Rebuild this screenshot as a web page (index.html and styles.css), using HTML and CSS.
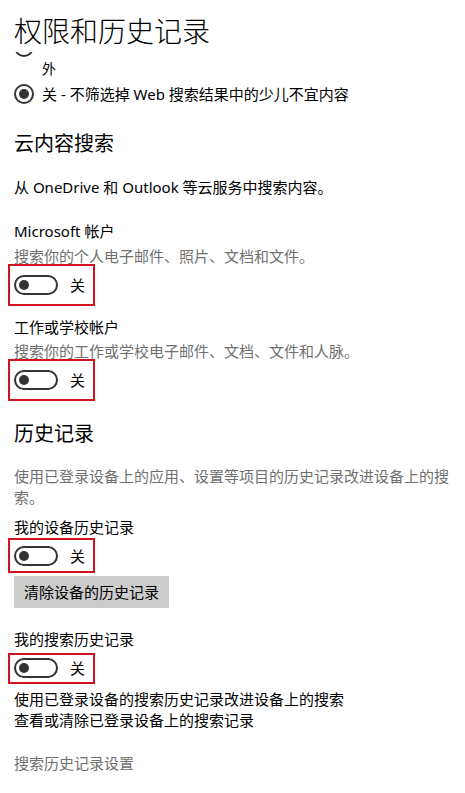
FILE: index.html
```html
<!DOCTYPE html>
<html lang="zh-CN">
<head>
<meta charset="utf-8">
<title>权限和历史记录</title>
<link rel="stylesheet" href="styles.css">
</head>
<body>
<div class="page">
  <header class="header">
    <h1 class="title">权限和历史记录</h1>
  </header>
  <main class="scroll">
    <div class="content">
      <div class="radio radio-first">
        <span class="radio-dot"></span>
        <span class="radio-label"><span class="line spacer"></span><span class="line">外</span></span>
      </div>
      <div class="radio radio-second">
        <span class="radio-dot"></span>
        <span class="radio-label"><span class="line">关 - 不筛选掉 Web 搜索结果中的少儿不宜内容</span></span>
      </div>

      <h2 class="section-title st-cloud">云内容搜索</h2>
      <p class="text t-cloud">从 OneDrive 和 Outlook 等云服务中搜索内容。</p>

      <p class="text t-ms">Microsoft 帐户</p>
      <p class="text muted t-ms-desc">搜索你的个人电子邮件、照片、文档和文件。</p>
      <div class="toggle-row tr-1">
        <span class="toggle"><span class="knob"></span></span>
        <span class="toggle-text">关</span>
      </div>

      <p class="text t-work">工作或学校帐户</p>
      <p class="text muted t-work-desc">搜索你的工作或学校电子邮件、文档、文件和人脉。</p>
      <div class="toggle-row tr-2">
        <span class="toggle"><span class="knob"></span></span>
        <span class="toggle-text">关</span>
      </div>

      <h2 class="section-title st-history">历史记录</h2>
      <p class="text muted t-hist-desc">使用已登录设备上的应用、设置等项目的历史记录改进设备上的搜索。</p>

      <p class="text t-device">我的设备历史记录</p>
      <div class="toggle-row tr-3">
        <span class="toggle"><span class="knob"></span></span>
        <span class="toggle-text">关</span>
      </div>
      <button class="btn" type="button">清除设备的历史记录</button>

      <p class="text t-search">我的搜索历史记录</p>
      <div class="toggle-row tr-4">
        <span class="toggle"><span class="knob"></span></span>
        <span class="toggle-text">关</span>
      </div>
      <p class="text t-link1">使用已登录设备的搜索历史记录改进设备上的搜索</p>
      <p class="text t-link2">查看或清除已登录设备上的搜索记录</p>

      <p class="text muted t-settings">搜索历史记录设置</p>
    </div>
  </main>
</div>
</body>
</html>
```

FILE: styles.css
```css
* { box-sizing: border-box; }

html, body {
  margin: 0;
  padding: 0;
  background: #ffffff;
}

body {
  font-family: "Noto Sans", "Noto Sans CJK SC", sans-serif;
  color: #000000;
  font-size: 15px;
  line-height: 21px;
}

.page {
  width: 465px;
  height: 793px;
  display: flex;
  flex-direction: column;
  overflow: hidden;
}

.header {
  position: relative;
  z-index: 2;
  height: 52px;
  padding: 13px 0 0 14px;
  background: #ffffff;
  flex: none;
}

.title {
  margin: 0;
  font-size: 28px;
  line-height: 36px;
  font-weight: 300;
  letter-spacing: 0;
}

.scroll {
  position: relative;
  z-index: 1;
  flex: 1;
}

.content {
  padding: 0 12px 0 14px;
  margin-top: -16px;
}

/* radio buttons */
.radio {
  display: flex;
  align-items: flex-start;
  gap: 8px;
}

.radio-first { margin-top: 0.5px; }
.radio-second { margin-top: 5px; }

.radio-dot {
  flex: none;
  width: 20px;
  height: 20px;
  margin-top: 0.5px;
  border: 2px solid #333333;
  border-radius: 50%;
  display: flex;
  align-items: center;
  justify-content: center;
}

.radio-dot::after {
  content: "";
  width: 10px;
  height: 10px;
  border-radius: 50%;
  background: #333333;
}

.radio-first .radio-dot::after { display: none; }

.radio-label .line { display: block; }
.radio-label .spacer { height: 21px; }

.radio-first .radio-label {
  font-size: 14px;
}

/* headings & text */
.section-title {
  margin: 0;
  font-size: 20px;
  line-height: 28px;
  font-weight: 400;
}

.text {
  margin: 0;
}

.muted { color: #707070; }

.st-cloud { margin-top: 25px; }
.t-cloud { margin-top: 19px; }
.t-ms { margin-top: 23px; }
.t-ms-desc { margin-top: 4px; }
.tr-1 { margin-top: 8.5px; }
.t-work { margin-top: 21.5px; }
.t-work-desc { margin-top: 3px; }
.tr-2 { margin-top: 8.5px; }
.st-history { margin-top: 30px; }
.t-hist-desc { margin-top: 17.5px; }
.t-device { margin-top: 9.5px; }
.tr-3 { margin-top: 8px; }
.btn { margin-top: 10px; }
.t-search { margin-top: 20.5px; }
.tr-4 { margin-top: 8.5px; }
.t-link1 { margin-top: 10.5px; }
.t-link2 { margin-top: 0; }
.t-settings { margin-top: 22.5px; }

/* toggle */
.toggle-row {
  position: relative;
  display: flex;
  align-items: center;
  gap: 12px;
  height: 20px;
}

.toggle-row::after {
  content: "";
  position: absolute;
  left: -6px;
  width: 83px;
  border: 2px solid #d2131f;
  pointer-events: none;
}

.tr-1::after, .tr-2::after { top: -11px; bottom: -11px; }
.tr-3::after { top: -8px; bottom: -7px; }
.tr-4::after { top: -5px; bottom: -6px; }

.toggle {
  flex: none;
  width: 44px;
  height: 20px;
  border: 2px solid #333333;
  border-radius: 10px;
  display: flex;
  align-items: center;
  padding-left: 3px;
}

.knob {
  width: 10px;
  height: 10px;
  border-radius: 50%;
  background: #333333;
}

.toggle-text {
  font-size: 15px;
  line-height: 20px;
}

/* button */
.btn {
  display: block;
  height: 32px;
  padding: 0 10px;
  border: none;
  background: #cccccc;
  color: #000000;
  font-family: "Noto Sans", "Noto Sans CJK SC", sans-serif;
  font-size: 15px;
  line-height: 32px;
  width: 155px;
  text-align: center;
}
```
